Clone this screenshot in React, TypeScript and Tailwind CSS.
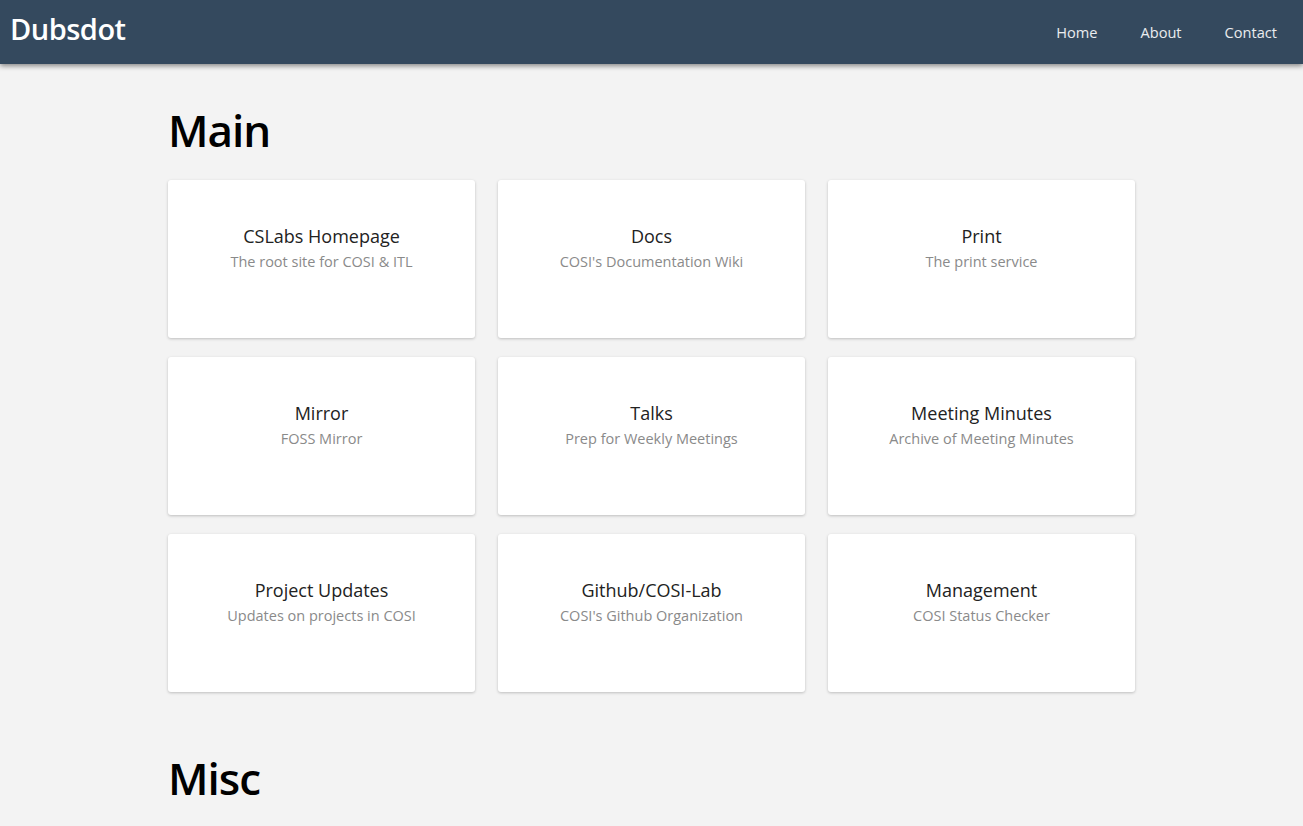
import React from 'react'

const MAIN_LINKS = [
  { title: 'CSLabs Homepage', description: 'The root site for COSI & ITL' },
  { title: 'Docs', description: "COSI's Documentation Wiki" },
  { title: 'Print', description: 'The print service' },
  { title: 'Mirror', description: 'FOSS Mirror' },
  { title: 'Talks', description: 'Prep for Weekly Meetings' },
  { title: 'Meeting Minutes', description: 'Archive of Meeting Minutes' },
  { title: 'Project Updates', description: 'Updates on projects in COSI' },
  { title: 'Github/COSI-Lab', description: "COSI's Github Organization" },
  { title: 'Management', description: 'COSI Status Checker' },
]

function Card({ title, description }: { title: string; description: string }) {
  return (
    <a
      href="#"
      className="block h-[158px] rounded-[3px] bg-white pt-[43px] text-center shadow-[0_1px_3px_rgba(0,0,0,0.22)]"
    >
      <div className="text-[18px] leading-[26px] text-[#222]">{title}</div>
      <div className="mt-[3px] text-[14.5px] leading-[20px] text-[#8a8a8a]">{description}</div>
    </a>
  )
}

export default function App() {
  return (
    <div className="min-h-screen bg-[#f3f3f3] font-['Open_Sans',sans-serif]">
      <header className="relative z-10 flex h-[64px] items-start justify-between bg-[#34495e] shadow-[0_2px_5px_rgba(0,0,0,0.45)]">
        <div className="pl-[10px] pt-[10px] text-[29px] font-semibold leading-[38px] tracking-[-0.5px] text-white">
          Dubsdot
        </div>
        <nav className="flex gap-[43px] pr-[26px] pt-[22px] text-[14.6px] leading-[20px] text-white/90">
          <a href="#">Home</a>
          <a href="#">About</a>
          <a href="#">Contact</a>
        </nav>
      </header>

      <main className="mx-auto w-[967px] pt-[36px]">
        <h1 className="text-[44px] font-semibold leading-[60px] tracking-[-1px] text-black">Main</h1>
        <div className="mt-[20px] grid grid-cols-3 gap-x-[23px] gap-y-[19px]">
          {MAIN_LINKS.map((link) => (
            <Card key={link.title} title={link.title} description={link.description} />
          ))}
        </div>

        <h1 className="mt-[56px] text-[44px] font-semibold leading-[60px] tracking-[-1px] text-black">Misc</h1>
      </main>
    </div>
  )
}
